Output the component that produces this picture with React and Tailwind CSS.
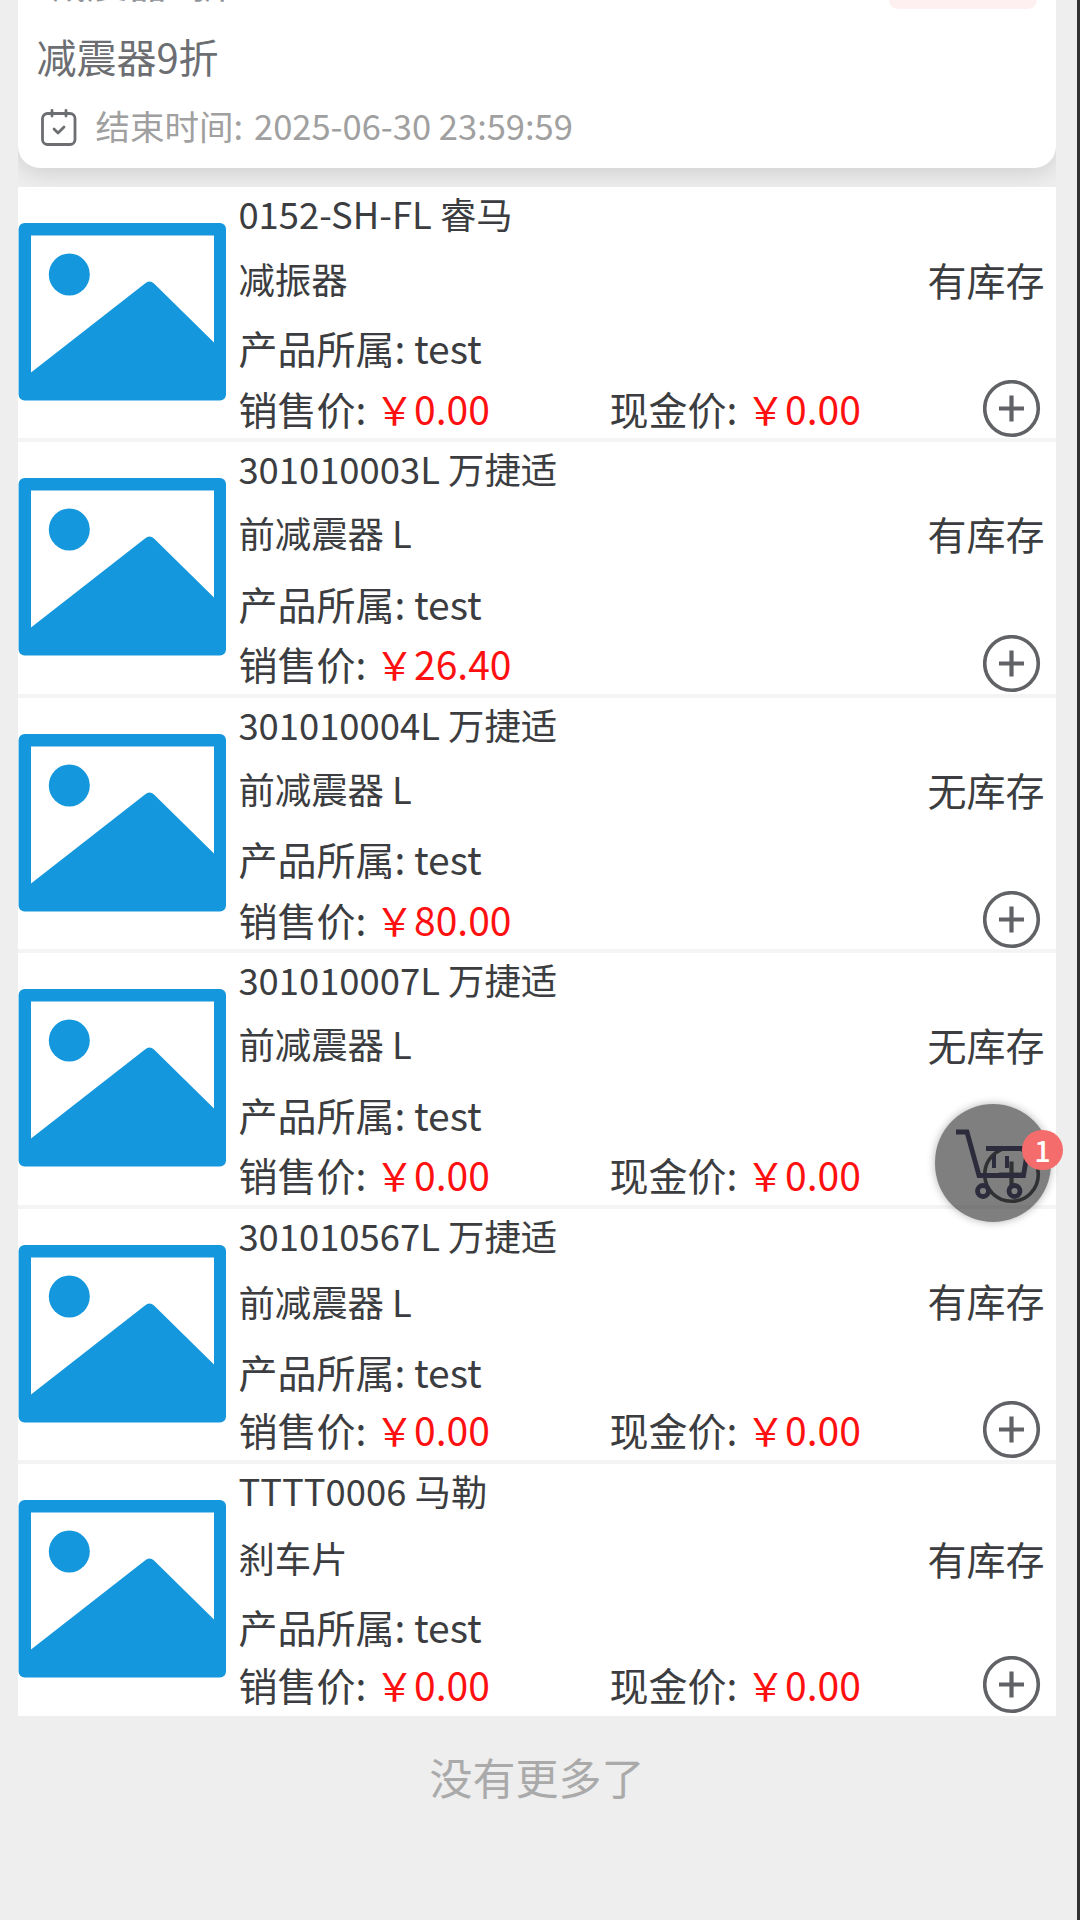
import React from 'react'

// the three middle lines sit slightly differently from row to row
const spacing = {
  a: { name: 'h-[78px]', owner: 'leading-[60px]', stock: 'pt-[3px]' },
  b: { name: 'h-[78px]', owner: 'leading-[66px]', stock: 'pt-[3px]' },
  c: { name: 'h-[78px]', owner: 'leading-[65px]', stock: 'pt-[2px]' },
  d: { name: 'h-[82px]', owner: 'leading-[56px]', stock: 'pb-[2px]' },
  e: { name: 'h-[82px]', owner: 'leading-[57px]', stock: 'pt-[3px]' },
}

const products = [
  { id: 1, code: '0152-SH-FL 睿马', name: '减振器', price: '0.00', cash: '0.00', stock: true, gap: spacing.a },
  { id: 2, code: '301010003L 万捷适', name: '前减震器 L', price: '26.40', stock: true, gap: spacing.b },
  { id: 3, code: '301010004L 万捷适', name: '前减震器 L', price: '80.00', stock: false, gap: spacing.c },
  { id: 4, code: '301010007L 万捷适', name: '前减震器 L', price: '0.00', cash: '0.00', stock: false, gap: spacing.c },
  { id: 5, code: '301010567L 万捷适', name: '前减震器 L', price: '0.00', cash: '0.00', stock: true, gap: spacing.d },
  { id: 6, code: 'TTTT0006 马勒', name: '刹车片', price: '0.00', cash: '0.00', stock: true, gap: spacing.e },
]

const Placeholder = () => (
  <svg className="w-[208px] h-[178px] mt-[36px] shrink-0" viewBox="0 0 208 178">
    <rect x="0.6" width="207.4" height="177.5" rx="6" fill="#1497dd" />
    <path d="M13 12.5H196V119.5L136 60.5Q131.5 56.5 127 60.5L13 149.5Z" fill="#fff" />
    <ellipse cx="51.3" cy="51.5" rx="20.5" ry="21" fill="#1497dd" />
  </svg>
)

const PlusIcon = () => (
  <svg className="w-[58px] h-[58px]" viewBox="0 0 58 58" fill="none" stroke="#606266">
    <circle cx="28.5" cy="28.5" r="26.8" strokeWidth="3.6" />
    <path d="M16 28.5H41M28.5 15.5V41.5" strokeWidth="4.2" />
  </svg>
)

const CartIcon = () => (
  <svg className="w-[78px] h-[72px]" viewBox="0 0 78 72" fill="none" stroke="#2c2c3c" strokeWidth="4.8">
    <path d="M2 5H13L25 48.5H69.5L74 21.5H32" />
    <path d="M40 28V41M53 29V41" strokeWidth="4" />
    <circle cx="29" cy="64" r="5.5" />
    <circle cx="60.5" cy="64" r="5.5" />
  </svg>
)

function Price({ label, value }) {
  return (
    <span className="whitespace-pre">
      {label}: <span className="text-[#ff1010]">￥{value}</span>
    </span>
  )
}

function ProductRow({ p }) {
  return (
    <div className="group flex h-[255.4px] bg-white border-b-4 border-[#f4f4f5] last:h-[252.5px] last:border-b-0 text-[#3c3d40]">
      <Placeholder />
      <div className="flex-1 pl-[12px] pb-px group-last:pb-[3px] flex flex-col">
        <div className="h-[52px] leading-[52px] text-[36.4px]">{p.code}</div>
        <div className={`${p.gap.name} flex items-center justify-between pr-[11px]`}>
          <span className="text-[36.4px]">{p.name}</span>
          <span className={`${p.gap.stock} text-[39px]`}>{p.stock ? '有库存' : '无库存'}</span>
        </div>
        <div className={`flex-1 ${p.gap.owner} text-[39px]`}>产品所属: test</div>
        <div className="h-[57px] flex items-center text-[39px] leading-[55px] pr-[15px]">
          <div className="w-[371px] pb-px"><Price label="销售价" value={p.price} /></div>
          <div className="flex-1 pb-px">{p.cash && <Price label="现金价" value={p.cash} />}</div>
          <PlusIcon />
        </div>
      </div>
    </div>
  )
}

function App() {
  return (
    <div className="relative w-[1080px] h-[1920px] overflow-hidden bg-[#eeeeee] border-r-[3px] border-[#333] pl-[18.4px] pr-[21.5px] font-['Noto_Sans_CJK_SC',sans-serif]">
      <div className="overflow-hidden h-[187px]">
        <div className="h-[168px] bg-white rounded-b-[22px] shadow-[0_4px_24px_rgba(0,0,0,0.14)]">
          <div className="h-[9px] flex items-end justify-between pl-[27px] pr-[19px]">
            {/* title scrolled out, only its lower edge is left */}
            <div className="h-[9px] leading-none text-[41px] text-[#909399] flex items-end">
              <span className="h-[49px] block">减震器9折</span>
            </div>
            <div className="w-[148px] h-[9px] bg-[#fef0f0] rounded-b-[10px]" />
          </div>
          <div className="pl-[18px] h-[96px] leading-[94px] text-[40px] text-[#6c6e72]">减震器9折</div>
          <div className="pl-[23px] h-[44px] flex items-center text-[34.5px] text-[#a0a0a0]">
            <svg className="w-[36px] h-[40px] mr-[18px]" viewBox="0 0 36 40" fill="none" stroke="#6c6e72" strokeWidth="2.8" strokeLinecap="round" strokeLinejoin="round">
              <rect x="1.5" y="6.5" width="32.5" height="31" rx="5" />
              <path d="M11 3.5V9M25 3.5V9M13 22L17 26L23 20" />
            </svg>
            <span className="mr-[11px] pb-[2px]">结束时间:</span>
            <span className="pb-[2px]">2025-06-30 23:59:59</span>
          </div>
        </div>
      </div>

      <div>
        {products.map((p) => <ProductRow key={p.id} p={p} />)}
      </div>

      <div className="text-center text-[43px] leading-[120px] text-[#aaa]">没有更多了</div>

      {/* floating cart */}
      <div className="absolute left-[935px] top-[1104px] w-[116px] h-[118px] rounded-full bg-black/50 shadow-[0_0_8px_rgba(0,0,0,0.3)] flex items-center justify-center">
        <CartIcon />
        <span className="absolute left-[87px] top-[26px] w-[41px] h-[40px] rounded-full bg-[#f56c6c] text-white text-[29px] leading-[38px] text-center font-medium">1</span>
      </div>
    </div>
  )
}

export default App
